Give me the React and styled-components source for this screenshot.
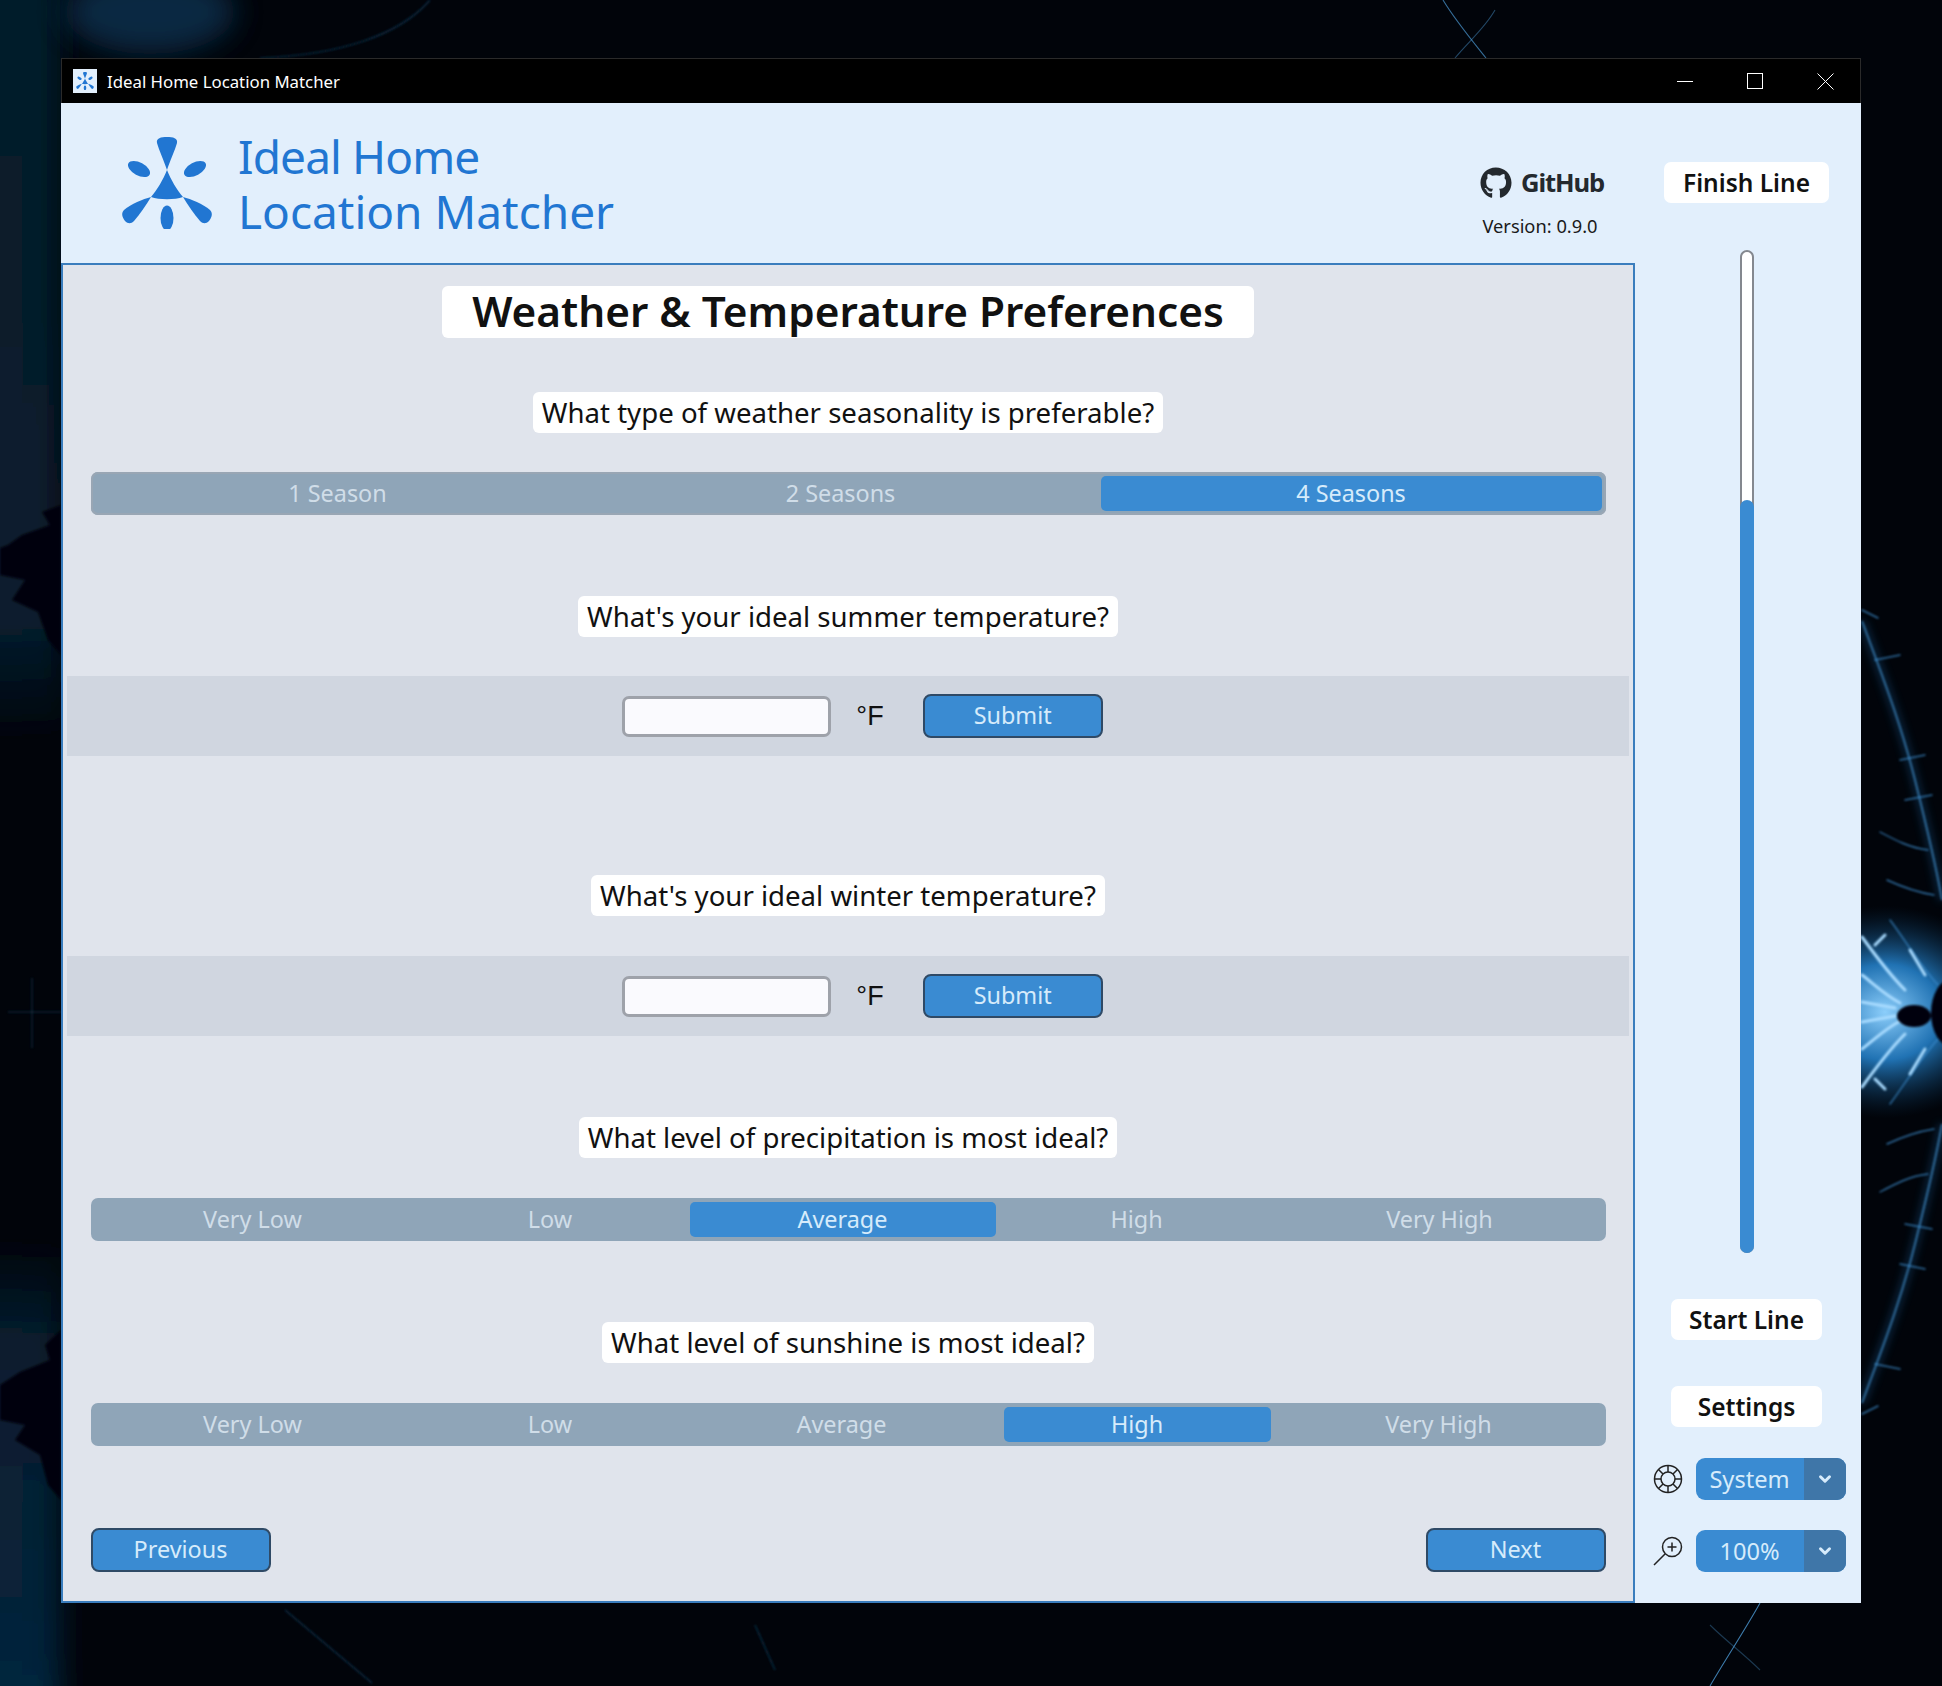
import React from 'react';
import styled, { createGlobalStyle } from 'styled-components';
import { FaGithub } from 'react-icons/fa';
import { FiChevronDown } from 'react-icons/fi';

const GlobalStyle = createGlobalStyle`
  html, body {
    margin: 0;
    padding: 0;
    background: #000;
  }
  * {
    box-sizing: border-box;
  }
`;

const FONT = `"Noto Sans", "Open Sans", sans-serif`;

// Desktop wallpaper behind the window
const Desktop = styled.div`
  position: relative;
  width: 1942px;
  height: 1686px;
  padding: 58px 81px 83px 61px;
  overflow: hidden;
  font-family: ${FONT};
  background: #01040a;
`;

const Wallpaper = styled.svg`
  position: absolute;
  inset: 0;
`;

const Window = styled.div`
  position: relative;
  width: 1800px;
  height: 1545px;
  display: flex;
  flex-direction: column;
  background: #e2effc;
`;

const TitleBar = styled.div`
  height: 45px;
  flex: none;
  display: flex;
  align-items: center;
  padding-left: 11px;
  background: #000;
  border: 1px solid #2a2a2a;
  border-bottom: 0;
  color: #fff;
  font-size: 16.8px;
`;

const TitleIcon = styled.div`
  width: 24px;
  height: 24px;
  margin-right: 10px;
  background: #e2effc;
  display: flex;
  align-items: center;
  justify-content: center;
`;

const WindowButtons = styled.div`
  margin-left: auto;
  display: flex;
  align-items: center;
`;

const WindowButton = styled.div`
  width: 70px;
  height: 44px;
  display: flex;
  align-items: center;
  justify-content: center;
`;

const Body = styled.div`
  flex: 1;
  display: flex;
  min-height: 0;
`;

const Main = styled.div`
  width: 1574px;
  display: flex;
  flex-direction: column;
`;

const Header = styled.header`
  height: 160px;
  flex: none;
  display: flex;
  align-items: flex-start;
  padding: 26px 0 0 60px;
`;

const LogoBox = styled.div`
  margin-top: 8px;
`;

const AppName = styled.div`
  margin-left: 25px;
  color: #2176d2;
  font-size: 46px;
  line-height: 55px;
`;

const AppNameLine = styled.div`
  letter-spacing: ${(p) => (p.$tight ? '-0.9px' : '0')};
`;

const HeaderLinks = styled.div`
  margin-left: auto;
  width: 160px;
  margin-right: 13px;
  padding-top: 36px;
  display: flex;
  flex-direction: column;
  align-items: center;
`;

const GithubLink = styled.div`
  display: flex;
  align-items: center;
  gap: 9px;
  color: #24292e;
  font-size: 25.6px;
  font-weight: 700;
  letter-spacing: -1.1px;
  line-height: 36px;
`;

const Version = styled.div`
  margin: 13px 4px 0 0;
  color: #1a1a1a;
  font-size: 18.3px;
  line-height: 24px;
`;

const Panel = styled.main`
  flex: 1;
  display: flex;
  flex-direction: column;
  align-items: center;
  background: #e0e4ec;
  border: 2px solid #3a7dbd;
  padding: 21px 2px 0;
`;

const PageTitle = styled.h1`
  margin: 0 0 54px;
  height: 52px;
  padding: 0 30px 3px;
  display: flex;
  align-items: center;
  background: #fff;
  border-radius: 6px;
  color: #111;
  font-size: 42.3px;
  font-weight: 600;
  white-space: nowrap;
`;

const Question = styled.div`
  height: 41px;
  padding: 0 9px 2px;
  display: flex;
  align-items: center;
  background: #fff;
  border-radius: 6px;
  color: #111;
  font-size: 27.6px;
  white-space: nowrap;
  margin-top: ${(p) => p.$top}px;
`;

const Segmented = styled.div`
  width: 1515px;
  height: 43px;
  flex: none;
  margin-top: ${(p) => p.$top || 39}px;
  padding: 4px;
  display: grid;
  grid-template-columns: ${(p) => p.$cols};
  background: #8fa5b8;
  border-radius: 7px;
  box-shadow: ${(p) => (p.$ring ? 'inset 0 0 0 2px #99a6b4' : 'none')};
`;

const Segment = styled.div`
  display: flex;
  align-items: center;
  justify-content: center;
  border-radius: 5px;
  font-size: 23.4px;
  padding: ${(p) => p.$pad || '0 0 2px'};
  color: ${(p) => (p.$active ? '#d6ebfb' : '#d0dde8')};
  background: ${(p) => (p.$active ? '#3a8bd2' : 'transparent')};
`;

const InputRow = styled.div`
  width: 1562px;
  height: 80px;
  flex: none;
  margin-top: ${(p) => p.$top}px;
  display: flex;
  align-items: center;
  justify-content: center;
  padding-left: 29px;
  background: #d0d6e0;
`;

const TempInput = styled.div`
  width: 209px;
  height: 41px;
  background: #fafafe;
  border: 3px solid #9ea2aa;
  border-radius: 7px;
`;

const Unit = styled.div`
  margin: 0 39px 0 25px;
  color: #111;
  font-size: 27px;
  font-family: "Liberation Sans", sans-serif;
`;

const ActionButton = styled.div`
  width: 180px;
  height: 44px;
  padding-bottom: 2px;
  display: flex;
  align-items: center;
  justify-content: center;
  background: #3a8bd2;
  border: 2px solid #2f4a66;
  border-radius: 8px;
  color: #d6ebfb;
  font-size: 23.4px;
`;

const Footer = styled.div`
  width: 1515px;
  margin-top: 82px;
  display: flex;
  justify-content: space-between;
`;

const Sidebar = styled.aside`
  flex: 1;
  display: flex;
  flex-direction: column;
  align-items: center;
  padding: 59px 3px 0 0;
`;

const SideLabel = styled.div`
  height: 41px;
  padding: 0 ${(p) => p.$pad}px;
  flex: none;
  display: flex;
  align-items: center;
  background: #fff;
  border-radius: 7px;
  color: #111;
  font-size: 24.5px;
  font-weight: 600;
  white-space: nowrap;
  margin-top: ${(p) => p.$top || 0}px;
`;

const Progress = styled.div`
  position: relative;
  width: 14px;
  height: 1003px;
  flex: none;
  margin-top: 47px;
  background: #fff;
  border: 2px solid #84888f;
  border-radius: 7px;
`;

const ProgressFill = styled.div`
  position: absolute;
  left: -2px;
  right: -2px;
  bottom: -2px;
  background: #3a8bd2;
  border-radius: 7px;
`;

const SettingRow = styled.div`
  width: calc(100% + 3px);
  display: flex;
  align-items: center;
  gap: 13px;
  padding-left: 19px;
  margin-top: ${(p) => p.$top}px;
`;

const Dropdown = styled.div`
  width: 150px;
  height: 42px;
  display: flex;
  overflow: hidden;
  border-radius: 9px;
  background: #3a8bd2;
  color: #d6ebfb;
  font-size: 23.6px;
`;

const DropdownValue = styled.div`
  flex: 1;
  display: flex;
  align-items: center;
  justify-content: center;
`;

const DropdownArrow = styled.div`
  width: 42px;
  display: flex;
  align-items: center;
  justify-content: center;
  background: #3f76a8;
`;

const LogoMark = ({ size }) => (
  <svg width={size} height={size} viewBox="0 0 92 92" style={{ display: 'block' }}>
    <g fill="#2176d2">
      <path d="M46 0 C40 0 35 1 36 6 C38 13 43 24 46 33 C49 24 54 13 56 6 C57 1 52 0 46 0 Z" />
      <path d="M46 33 C42 43 36 53 30 60 C38 63 54 63 62 60 C56 53 50 43 46 33 Z" />
      <path d="M30 60 C22 62 10 67 3 73 C0 76 1 80 4 84 C7 87 10 87 13 84 C19 77 25 68 30 60 Z" />
      <path d="M62 60 C70 62 82 67 89 73 C92 76 91 80 88 84 C85 87 82 87 79 84 C73 77 67 68 62 60 Z" />
      <ellipse cx="46" cy="81" rx="6.5" ry="12.5" />
      <ellipse cx="18" cy="32" rx="12" ry="6.5" transform="rotate(28 18 32)" />
      <ellipse cx="74" cy="32" rx="12" ry="6.5" transform="rotate(-28 74 32)" />
    </g>
  </svg>
);

const WheelIcon = () => (
  <svg width="30" height="30" viewBox="0 0 30 30" fill="none" stroke="#222" strokeWidth="1.5">
    <circle cx="15" cy="15" r="13.5" />
    <circle cx="15" cy="15" r="7" />
    <path d="M15 1.5v6.5M15 22v6.5M1.5 15h6.5M22 15h6.5M5.5 5.5l4.5 4.5M20 20l4.5 4.5M24.5 5.5L20 10M10 20l-4.5 4.5" />
  </svg>
);

const ZoomIcon = () => (
  <svg width="30" height="30" viewBox="0 0 30 30" fill="none" stroke="#222" strokeWidth="1.5">
    <circle cx="19" cy="11" r="9.5" />
    <path d="M19 6.5v9M14.5 11h9M12 18L1 29" />
  </svg>
);

// Fractal feathers on the right edge, mirrored around y = 1012
const ARC = 'M1862 621C1880 670 1900 720 1915 780C1925 820 1935 860 1942 900';

const feathers = [
  'M1862 610L1878 618', 'M1875 660L1900 655', 'M1880 832C1895 840 1910 848 1928 850',
  'M1887 880C1900 886 1915 892 1934 895', 'M1890 920C1905 940 1920 965 1938 985',
  'M1900 760L1925 755', 'M1905 800L1932 795',
];

const glow = [
  'M1862 937C1875 955 1890 975 1905 990', 'M1862 975C1875 985 1885 995 1900 1003',
  'M1875 945L1885 935', 'M1910 950L1925 975', 'M1862 1002L1895 1008',
];

const Fractal = () => (
  <g>
    <path d={ARC} stroke="#1d6cae" strokeWidth="7" opacity="0.35" filter="url(#softer)" />
    <path d={ARC} stroke="#4ba6ea" strokeWidth="1.6" opacity="0.7" filter="url(#soft)" />
    <g stroke="#3d8fd0" strokeWidth="1.4" strokeLinecap="round" opacity="0.75" filter="url(#soft)">
      {feathers.map((d) => <path key={d} d={d} />)}
    </g>
    <g stroke="#a8dbff" strokeWidth="3" strokeLinecap="round" filter="url(#soft)">
      {glow.map((d) => <path key={d} d={d} />)}
    </g>
  </g>
);

const App = () => (
  <Desktop>
    <GlobalStyle />
    <Wallpaper width="1942" height="1686" viewBox="0 0 1942 1686" fill="none">
      <defs>
        <radialGradient id="core" gradientUnits="userSpaceOnUse" cx="1885" cy="1012" r="125" gradientTransform="translate(0 1012) scale(1 0.85) translate(0 -1012)">
          <stop offset="0" stopColor="#8ccefb" />
          <stop offset="0.45" stopColor="#2278bc" stopOpacity="0.95" />
          <stop offset="1" stopColor="#0a3050" stopOpacity="0" />
        </radialGradient>
        <linearGradient id="edgeTop" x1="0" y1="0" x2="0" y2="1">
          <stop offset="0" stopColor="#061a2a" />
          <stop offset="0.85" stopColor="#071c2e" />
          <stop offset="1" stopColor="#071c2e" stopOpacity="0" />
        </linearGradient>
        <linearGradient id="edgeBottom" x1="0" y1="0" x2="0" y2="1">
          <stop offset="0" stopColor="#071c2e" stopOpacity="0" />
          <stop offset="0.2" stopColor="#071c2e" />
          <stop offset="1" stopColor="#06263e" />
        </linearGradient>
        <filter id="soft" x="-30%" y="-30%" width="160%" height="160%"><feGaussianBlur stdDeviation="1.2" /></filter>
        <filter id="softer" x="-30%" y="-30%" width="160%" height="160%"><feGaussianBlur stdDeviation="4" /></filter>
        <filter id="wide" x="-50%" y="-50%" width="200%" height="200%"><feGaussianBlur stdDeviation="14" /></filter>
      </defs>

      <g filter="url(#wide)">
        <rect x="-40" y="-40" width="100" height="780" fill="url(#edgeTop)" />
        <rect x="-40" y="1240" width="100" height="486" fill="url(#edgeBottom)" />
      </g>
      <ellipse cx="150" cy="12" rx="85" ry="42" fill="#0b3554" opacity="0.75" filter="url(#wide)" />

      <g fill="#01040a" filter="url(#soft)">
        <path d="M61 505L42 512L50 525L22 535L8 545L0 548L0 575L25 580L12 600L38 612L48 640L61 655Z" />
        <path d="M61 1330L45 1345L50 1360L20 1372L0 1385L0 1420L25 1425L15 1440L40 1455L48 1485L61 1500Z" />
      </g>
      <g stroke="#1b3c56" strokeWidth="1" filter="url(#soft)" opacity="0.8">
        <path d="M8 1012H61M32 978V1048" />
      </g>

      <rect x="1861" y="800" width="81" height="424" fill="url(#core)" />
      <g>
        <Fractal />
        <g transform="translate(0 2024) scale(1 -1)">
          <Fractal />
        </g>
      </g>
      <g fill="#02060c" filter="url(#soft)">
        <ellipse cx="1914" cy="1016" rx="17" ry="11" />
        <ellipse cx="1952" cy="1013" rx="21" ry="34" />
      </g>

      <g stroke="#4c9ad4" strokeWidth="1.1">
        <path d="M1443 0C1455 20 1470 38 1486 58" opacity="0.7" />
        <path d="M1495 10C1485 28 1468 42 1455 58" opacity="0.45" />
        <path d="M1760 1603C1745 1630 1725 1660 1710 1686" opacity="0.8" />
        <path d="M1710 1625C1725 1640 1745 1655 1760 1670" opacity="0.35" />
      </g>
      <g stroke="#10324c" strokeWidth="1.2" filter="url(#soft)">
        <path d="M285 1610L372 1683" />
        <path d="M755 1625L775 1670" />
        <path d="M430 0C400 35 340 55 260 58" />
      </g>
    </Wallpaper>
    <Window>
      <TitleBar>
        <TitleIcon><LogoMark size={18} /></TitleIcon>
        Ideal Home Location Matcher
        <WindowButtons>
          <WindowButton>
            <svg width="16" height="16" viewBox="0 0 16 16" stroke="#fff" strokeWidth="1"><path d="M0 8.5h16" /></svg>
          </WindowButton>
          <WindowButton>
            <svg width="16" height="16" viewBox="0 0 16 16" fill="none" stroke="#fff" strokeWidth="1"><rect x="0.5" y="0.5" width="15" height="15" /></svg>
          </WindowButton>
          <WindowButton>
            <svg width="17" height="17" viewBox="0 0 17 17" stroke="#fff" strokeWidth="1"><path d="M0.5 0.5l16 16M16.5 0.5l-16 16" /></svg>
          </WindowButton>
        </WindowButtons>
      </TitleBar>
      <Body>
        <Main>
          <Header>
            <LogoBox><LogoMark size={92} /></LogoBox>
            <AppName>
              <AppNameLine $tight>Ideal Home</AppNameLine>
              <AppNameLine>Location Matcher</AppNameLine>
            </AppName>
            <HeaderLinks>
              <GithubLink><FaGithub size={32} />GitHub</GithubLink>
              <Version>Version: 0.9.0</Version>
            </HeaderLinks>
          </Header>
          <Panel>
            <PageTitle>Weather &amp; Temperature Preferences</PageTitle>
            <Question $top={0}>What type of weather seasonality is preferable?</Question>
            <Segmented $ring $cols="486px 520px 1fr">
              <Segment>1 Season</Segment>
              <Segment>2 Seasons</Segment>
              <Segment $active>4 Seasons</Segment>
            </Segmented>
            <Question $top={81}>What's your ideal summer temperature?</Question>
            <InputRow $top={39}>
              <TempInput />
              <Unit>°F</Unit>
              <ActionButton>Submit</ActionButton>
            </InputRow>
            <Question $top={119}>What's your ideal winter temperature?</Question>
            <InputRow $top={40}>
              <TempInput />
              <Unit>°F</Unit>
              <ActionButton>Submit</ActionButton>
            </InputRow>
            <Question $top={81}>What level of precipitation is most ideal?</Question>
            <Segmented $top={40} $cols="316px 279px 306px 282px 1fr">
              <Segment>Very Low</Segment>
              <Segment>Low</Segment>
              <Segment $active>Average</Segment>
              <Segment>High</Segment>
              <Segment>Very High</Segment>
            </Segmented>
            <Question $top={81}>What level of sunshine is most ideal?</Question>
            <Segmented $top={40} $cols="316px 279px 314px 267px 1fr">
              <Segment>Very Low</Segment>
              <Segment>Low</Segment>
              <Segment $pad="0 10px 2px 0">Average</Segment>
              <Segment $active>High</Segment>
              <Segment $pad="0 0 2px 5px">Very High</Segment>
            </Segmented>
            <Footer>
              <ActionButton>Previous</ActionButton>
              <ActionButton>Next</ActionButton>
            </Footer>
          </Panel>
        </Main>
        <Sidebar>
          <SideLabel $pad={19}>Finish Line</SideLabel>
          <Progress>
            <ProgressFill style={{ height: `${(753 / 999) * 100}%` }} />
          </Progress>
          <SideLabel $pad={18} $top={46}>Start Line</SideLabel>
          <SideLabel $pad={27} $top={46}>Settings</SideLabel>
          <SettingRow $top={31}>
            <WheelIcon />
            <Dropdown>
              <DropdownValue>System</DropdownValue>
              <DropdownArrow><FiChevronDown size={18} color="#d6ebfb" strokeWidth={4} /></DropdownArrow>
            </Dropdown>
          </SettingRow>
          <SettingRow $top={30}>
            <ZoomIcon />
            <Dropdown>
              <DropdownValue>100%</DropdownValue>
              <DropdownArrow><FiChevronDown size={18} color="#d6ebfb" strokeWidth={4} /></DropdownArrow>
            </Dropdown>
          </SettingRow>
        </Sidebar>
      </Body>
    </Window>
  </Desktop>
);

export default App;
